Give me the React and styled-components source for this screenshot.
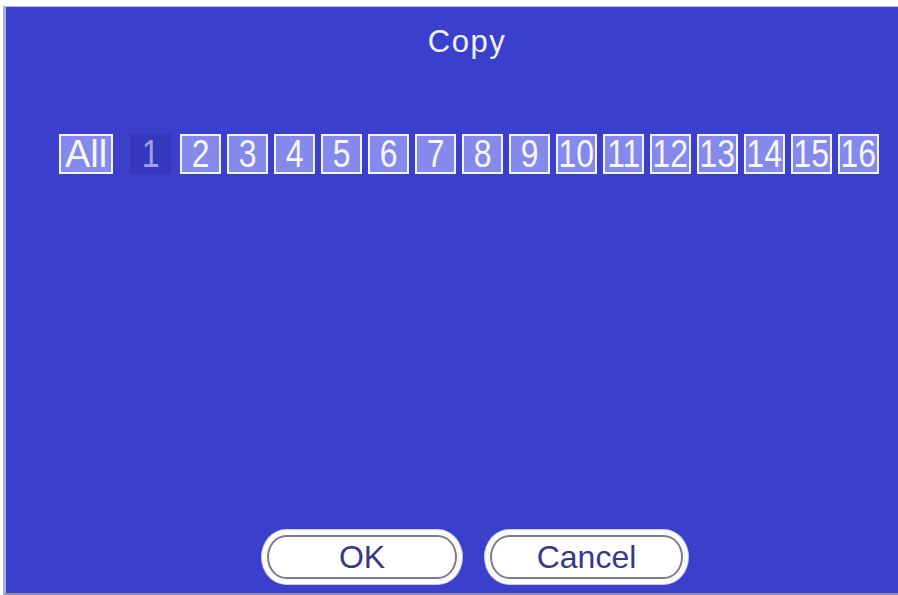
import React from 'react'
import styled, { createGlobalStyle, css } from 'styled-components'

const GlobalStyle = createGlobalStyle`
  html, body {
    margin: 0;
    padding: 0;
    background: #ffffff;
    font-family: 'Liberation Sans', Arial, sans-serif;
  }
  * {
    box-sizing: border-box;
  }
`

const Screen = styled.div`
  width: 898px;
  height: 595px;
  padding: 6px 0 0 3px;
  overflow: hidden;
`

const Panel = styled.div`
  height: 589px;
  display: flex;
  flex-direction: column;
  align-items: center;
  padding: 0 0 9px 30px;
  background: #3a40cc;
  border-left: 3px solid #aab0d8;
  border-top: 1px solid #b8bce6;
  border-bottom: 2px solid #8b8cae;
`

const Title = styled.div`
  margin-top: 19px;
  font-size: 31px;
  line-height: 1;
  letter-spacing: 1.5px;
  color: #eef0ff;
`

const ChannelRow = styled.div`
  align-self: flex-start;
  display: flex;
  gap: 6px;
  margin: 77px 0 0 23px;
`

const Channel = styled.div`
  width: ${p => (p.$wide ? '54px' : '41px')};
  height: 40px;
  display: flex;
  align-items: center;
  justify-content: center;
  overflow: hidden;
  font-size: 38px;
  line-height: 1;
  color: #f6f6ff;
  background: #8589ec;
  border: 2px solid #f2f3ff;

  ${p =>
    p.$wide &&
    css`
      margin-right: 11px;
    `}

  ${p =>
    p.$off &&
    css`
      margin-right: 3px;
      color: #9da1df;
      background: #3338bc;
      border-color: #3338bc;
    `}
`

const Label = styled.span`
  display: inline-block;
  white-space: nowrap;
  transform: ${p => (p.$narrow ? 'scaleX(0.84)' : 'none')};
`

const ButtonBar = styled.div`
  align-self: flex-start;
  display: flex;
  gap: 23px;
  margin: auto 0 0 226px;
`

const Button = styled.button`
  width: ${p => p.$width}px;
  height: 54px;
  padding: 0;
  font-family: 'Liberation Sans', Arial, sans-serif;
  font-size: 32px;
  color: #37388a;
  background: #ffffff;
  border: 3px solid #ffffff;
  border-radius: 24px / 50%;
  box-shadow: 0 0 0 1px #c9cbf2, inset 0 0 0 2px #ffffff, inset 0 0 0 4px #7c7c90;
  cursor: pointer;
`

const channels = Array.from({ length: 16 }, (_, i) => i + 1)

const App = () => {
  return (
    <>
      <GlobalStyle />
      <Screen>
        <Panel>
          <Title>Copy</Title>
          <ChannelRow>
            <Channel $wide>
              <Label>All</Label>
            </Channel>
            {channels.map(n => (
              <Channel key={n} $off={n === 1}>
                <Label $narrow>{n}</Label>
              </Channel>
            ))}
          </ChannelRow>
          <ButtonBar>
            <Button $width={200}>OK</Button>
            <Button $width={203}>Cancel</Button>
          </ButtonBar>
        </Panel>
      </Screen>
    </>
  )
}

export default App
